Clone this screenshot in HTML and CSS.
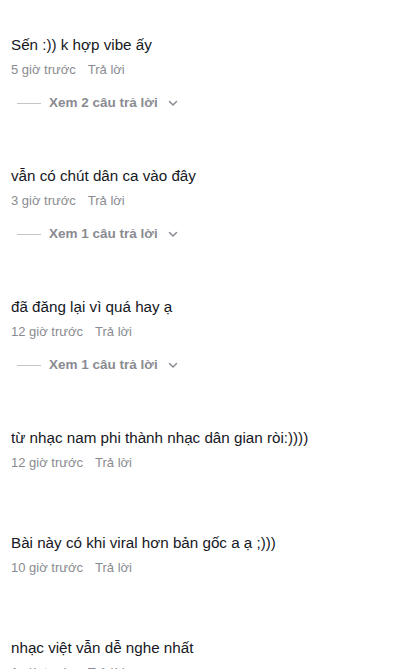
FILE: index.html
```html
<!DOCTYPE html>
<html lang="vi">

<head>
    <meta charset="UTF-8">
    <meta name="viewport" content="width=device-width, initial-scale=1.0">
    <title>Bình luận</title>
    <link rel="stylesheet" href="styles.css">
</head>

<body>
    <div class="comment-list">
        <!-- Comment 1 -->
        <div class="comment has-replies">
            <p class="comment-text">Sến :)) k hợp vibe ấy</p>
            <div class="comment-meta">
                <span class="time">5 giờ trước</span>
                <span class="reply-btn">Trả lời</span>
            </div>
            <div class="view-replies">
                <span class="dash"></span>
                <span class="view-label">Xem 2 câu trả lời</span>
                <svg class="chevron" viewBox="0 0 10 10" width="10" height="10">
                    <path d="M1.5 3.5 L5 7 L8.5 3.5" />
                </svg>
            </div>
        </div>

        <!-- Comment 2 -->
        <div class="comment has-replies">
            <p class="comment-text">vẫn có chút dân ca vào đây</p>
            <div class="comment-meta">
                <span class="time">3 giờ trước</span>
                <span class="reply-btn">Trả lời</span>
            </div>
            <div class="view-replies">
                <span class="dash"></span>
                <span class="view-label">Xem 1 câu trả lời</span>
                <svg class="chevron" viewBox="0 0 10 10" width="10" height="10">
                    <path d="M1.5 3.5 L5 7 L8.5 3.5" />
                </svg>
            </div>
        </div>

        <!-- Comment 3 -->
        <div class="comment has-replies">
            <p class="comment-text">đã đăng lại vì quá hay ạ</p>
            <div class="comment-meta">
                <span class="time">12 giờ trước</span>
                <span class="reply-btn">Trả lời</span>
            </div>
            <div class="view-replies">
                <span class="dash"></span>
                <span class="view-label">Xem 1 câu trả lời</span>
                <svg class="chevron" viewBox="0 0 10 10" width="10" height="10">
                    <path d="M1.5 3.5 L5 7 L8.5 3.5" />
                </svg>
            </div>
        </div>

        <!-- Comment 4 -->
        <div class="comment">
            <p class="comment-text">từ nhạc nam phi thành nhạc dân gian ròi:))))</p>
            <div class="comment-meta">
                <span class="time">12 giờ trước</span>
                <span class="reply-btn">Trả lời</span>
            </div>
        </div>

        <!-- Comment 5 -->
        <div class="comment">
            <p class="comment-text">Bài này có khi viral hơn bản gốc a ạ ;)))</p>
            <div class="comment-meta">
                <span class="time">10 giờ trước</span>
                <span class="reply-btn">Trả lời</span>
            </div>
        </div>

        <!-- Comment 6 -->
        <div class="comment">
            <p class="comment-text">nhạc việt vẫn dễ nghe nhất</p>
            <div class="comment-meta">
                <span class="time">1 giờ trước</span>
                <span class="reply-btn">Trả lời</span>
            </div>
        </div>
    </div>
</body>

</html>
```

FILE: styles.css
```css
body {
    margin: 0;
    background-color: #ffffff;
    font-family: "Liberation Sans", Arial, sans-serif;
    color: #161823;
}

.comment-list {
    padding: 34px 11px 0 11px;
}

.comment {
    padding-bottom: 60px;
}

.comment.has-replies {
    padding-bottom: 53px;
}

.comment-text {
    margin: 0;
    font-size: 15.2px;
    line-height: 22px;
    color: #161823;
}

.comment-meta {
    display: flex;
    gap: 12px;
    margin-top: 5px;
    font-size: 13px;
    line-height: 18px;
    color: #8a8b91;
}

.view-replies {
    display: flex;
    align-items: center;
    margin-top: 15px;
    padding-left: 6px;
    font-size: 13.5px;
    line-height: 18px;
    font-weight: bold;
    color: #8a8b91;
}

.dash {
    width: 24px;
    height: 1px;
    margin-right: 8px;
    background-color: #c4c5c8;
}

.chevron {
    margin-left: 10px;
    fill: none;
    stroke: #8a8b91;
    stroke-width: 1.5;
    stroke-linecap: round;
    stroke-linejoin: round;
}
```
